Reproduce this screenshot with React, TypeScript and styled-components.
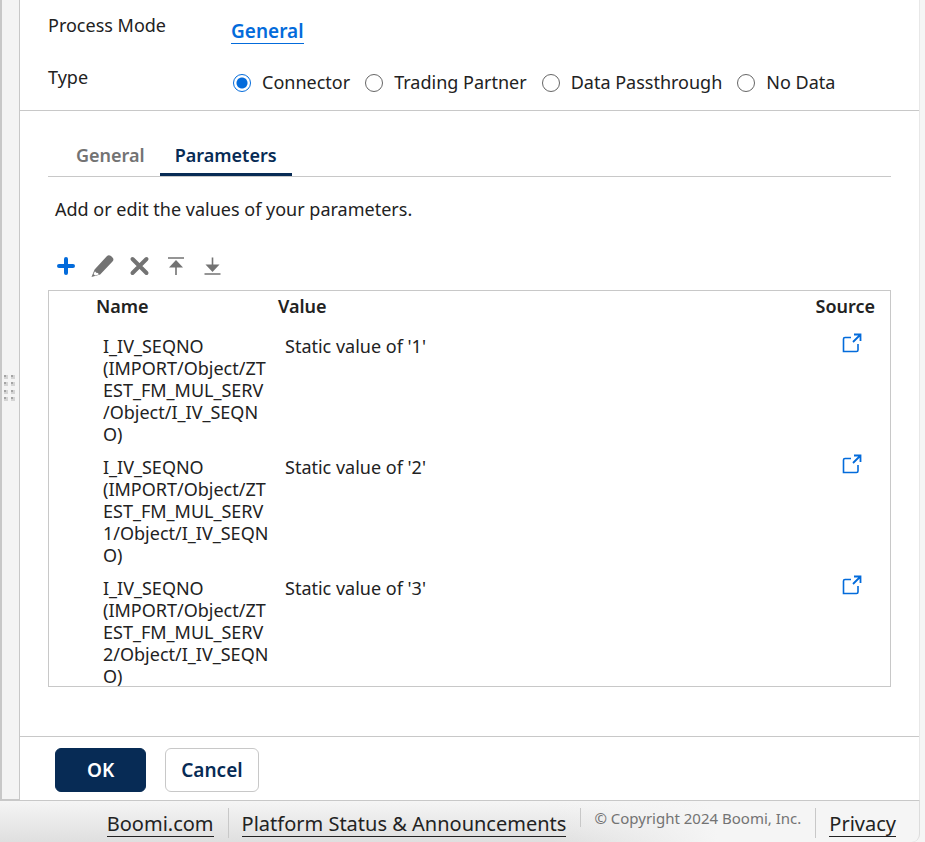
import React, { useState } from "react";
import styled, { createGlobalStyle, css } from "styled-components";

const color = {
  text: "#222222",
  line: "#c8c8c8",
  blue: "#036bdb",
  navy: "#072b55",
  grey: "#737373",
};

const GlobalStyle = createGlobalStyle`
  * { box-sizing: border-box; }
  body {
    margin: 0;
    background: #f5f5f5;
    color: ${color.text};
    font-family: "Noto Sans", "Open Sans", sans-serif;
    font-size: 18px;
    line-height: 22px;
  }
  button, input { font: inherit; }
`;

const Page = styled.div`
  display: flex;
  flex-direction: column;
  height: 100vh;
  overflow: hidden;
`;

const Shell = styled.div`
  display: flex;
  flex: 1;
  min-height: 0;
  padding-right: 5px;
`;

const Splitter = styled.div`
  display: flex;
  align-items: center;
  width: 20px;
  border: 1px solid ${color.line};
  border-top: 0;
  border-width: 0 1px 2px 2px;
  background: #f4f4f4;
  padding-bottom: 24px;
`;

const Panel = styled.main`
  display: flex;
  flex: 1;
  flex-direction: column;
  min-width: 0;
  background: #ffffff;
  border-right: 1px solid #e8e8e8;
  border-bottom: 1px solid ${color.line};
`;

const Settings = styled.section`
  display: grid;
  grid-template-columns: 182px 1fr;
  row-gap: 22px;
  padding: 14px 28px 17px;
  border-bottom: 1px solid ${color.line};
`;

const FieldLabel = styled.span``;

const Field = styled.div`
  display: flex;
  align-items: center;
  padding-top: 5px;
`;

const ModeLink = styled.a`
  margin-left: 1px;
  border-bottom: 1px solid ${color.blue};
  color: ${color.blue};
  font-size: 19px;
  font-weight: 600;
  line-height: 24px;
  text-decoration: none;
`;

const Choices = styled.div`
  display: flex;
  gap: 15px;
  padding: 5px 0 0 3px;
`;

const Choice = styled.label`
  display: flex;
  align-items: center;
  gap: 11px;
  white-space: nowrap;
`;

const Radio = styled.input`
  appearance: none;
  flex: none;
  width: 18px;
  height: 18px;
  margin: 2px 0 0;
  border: 1px solid #666666;
  border-radius: 50%;
  background: #ffffff;
  &:checked {
    border-color: ${color.blue};
    background: radial-gradient(circle, ${color.blue} 5px, #ffffff 6px);
  }
`;

const Content = styled.section`
  display: flex;
  flex: 1;
  flex-direction: column;
  min-height: 0;
  padding: 27px 28px 49px;
`;

const Tabs = styled.div`
  display: flex;
  padding-left: 13px;
  border-bottom: 1px solid ${color.line};
`;

const Tab = styled.button<{ $active: boolean }>`
  padding: 6px 15px 7px;
  border: 0;
  border-bottom: 3px solid ${(p) => (p.$active ? color.navy : "transparent")};
  background: none;
  color: ${(p) => (p.$active ? color.navy : color.grey)};
  font-weight: 600;
`;

const Hint = styled.p`
  margin: 21px 7px 34px;
`;

const Toolbar = styled.div`
  display: flex;
  gap: 12px;
  padding: 0 5px 12px;
`;

const ToolButton = styled.button<{ $accent?: boolean }>`
  width: 25px;
  height: 24px;
  padding: 0;
  border: 0;
  background: none;
  color: ${(p) => (p.$accent ? color.blue : color.grey)};
  svg { display: block; }
`;

const TableBox = styled.div`
  flex: 1;
  min-height: 0;
  overflow: hidden;
  border: 1px solid ${color.line};
`;

const Table = styled.table`
  width: 100%;
  border-collapse: collapse;
  table-layout: fixed;
`;

const Col = styled.col<{ $width?: number }>`
  ${(p) => p.$width && css`width: ${p.$width}px;`}
`;

const Head = styled.th<{ $end?: boolean }>`
  padding: 4px 15px 13px 0;
  font-weight: 600;
  text-align: ${(p) => (p.$end ? "right" : "left")};
`;

const Cell = styled.td<{ $end?: boolean }>`
  padding: 5px 9px 6px 7px;
  vertical-align: top;
  ${(p) => p.$end && css`padding: 3px 28px 0 0; text-align: right;`}
`;

const Path = styled.div`
  word-break: break-all;
`;

const SourceLink = styled.a`
  display: inline-block;
  color: ${color.blue};
  svg { display: block; }
`;

const Actions = styled.div`
  display: flex;
  gap: 19px;
  padding: 11px 35px 8px;
  border-top: 1px solid ${color.line};
`;

const ActionButton = styled.button<{ $primary?: boolean }>`
  height: 44px;
  padding: 0 ${(p) => (p.$primary ? 31 : 15)}px;
  border: 1px solid ${(p) => (p.$primary ? color.navy : color.line)};
  border-radius: 6px;
  background: ${(p) => (p.$primary ? color.navy : "#ffffff")};
  color: ${(p) => (p.$primary ? "#ffffff" : color.navy)};
  font-size: 19px;
  font-weight: 600;
`;

const Footer = styled.footer`
  display: flex;
  justify-content: flex-end;
  height: 41px;
  margin-right: 5px;
  padding: 7px 23px 0 0;
  border-right: 1px solid #dcdcdc;
  border-bottom-right-radius: 8px;
  background:
    linear-gradient(90deg, rgba(245, 245, 245, 0) 60%, #f5f5f5 78%),
    linear-gradient(#f5f5f5, #dfdfdf);
  white-space: nowrap;
`;

const FooterItem = styled.div<{ $short?: boolean }>`
  height: ${(p) => (p.$short ? 19 : 30)}px;
  padding: 0 14px 0 13px;
  border-left: 1px solid ${color.line};
  &:first-child { border-left: 0; }
  &:last-child { padding-right: 0; }
`;

const FooterLink = styled.a`
  display: inline-block;
  margin-top: 4px;
  border-bottom: 1px solid ${color.text};
  color: ${color.text};
  font-size: 20px;
  line-height: 24px;
  text-decoration: none;
`;

const Copyright = styled.small`
  display: block;
  color: ${color.grey};
  font-size: 15px;
  line-height: 20px;
`;

const Grip = () => (
  <svg width="14" height="28" viewBox="0 0 14 28" aria-hidden="true">
    {[1, 8, 16, 23].flatMap((y) =>
      [2, 9].map((x) => (
        <g key={`${x}-${y}`}>
          <rect x={x} y={y} width="4" height="4" fill="#d4d4d4" />
          <rect x={x} y={y} width="2" height="2" fill="#a4a4a4" />
        </g>
      ))
    )}
  </svg>
);

const icons = {
  add: <path d="M13 5v14M6 12h14" stroke="currentColor" strokeWidth="4" strokeLinecap="round" />,
  edit: (
    <>
      <path d="M4.6 15.6 16.8 2.2q2-2 4.2-.1l1.5 1.4q1.9 2 0 4L10.2 20.5l-8.7 2.6z" fill="currentColor" />
      <path d="m5 17.2 1.2 1.6 1.8.2.8 1.4-3.8 1.2-1.5-1.5z" fill="#ffffff" />
    </>
  ),
  remove: <path d="m5.5 5 14 14M19.5 5l-14 14" stroke="currentColor" strokeWidth="4" strokeLinecap="round" />,
  top: (
    <>
      <path d="M4 4h16M12 8v13" stroke="currentColor" strokeWidth="1.6" />
      <path d="m12 6 7 7.5H5z" fill="currentColor" />
    </>
  ),
  bottom: (
    <>
      <path d="M3.5 20h16M11.5 3.5v12" stroke="currentColor" strokeWidth="1.6" />
      <path d="m11.5 18 7-7.5h-14z" fill="currentColor" />
    </>
  ),
};

const ToolIcon = ({ name }: { name: keyof typeof icons }) => (
  <svg width="25" height="24" viewBox="0 0 25 24" fill="none" aria-hidden="true">
    {icons[name]}
  </svg>
);

const ExternalIcon = () => (
  <svg width="20" height="20" viewBox="0 0 20 20" fill="none" stroke="currentColor" aria-hidden="true">
    <path d="M9 4.5H3Q1.5 4.5 1.5 6V18.5H14.5Q16 18.5 16 17V11" strokeWidth="1.6" />
    <path d="M12 1.5H18.5V8M18.5 1.5 11 9" strokeWidth="1.8" />
  </svg>
);

const tools: { name: keyof typeof icons; label: string }[] = [
  { name: "add", label: "Add" },
  { name: "edit", label: "Edit" },
  { name: "remove", label: "Remove" },
  { name: "top", label: "Move to top" },
  { name: "bottom", label: "Move to bottom" },
];

const rows = [
  { object: "ZTEST_FM_MUL_SERV", field: "I_IV_SEQNO", value: "1" },
  { object: "ZTEST_FM_MUL_SERV1", field: "I_IV_SEQNO", value: "2" },
  { object: "ZTEST_FM_MUL_SERV2", field: "I_IV_SEQNO", value: "3" },
];

const types = ["Connector", "Trading Partner", "Data Passthrough", "No Data"];

export default function App() {
  const [type, setType] = useState("Connector");
  const [tab, setTab] = useState("Parameters");

  return (
    <Page>
      <GlobalStyle />
      <Shell>
        <Splitter>
          <Grip />
        </Splitter>
        <Panel>
          <Settings>
            <FieldLabel>Process Mode</FieldLabel>
            <Field>
              <ModeLink href="#mode">General</ModeLink>
            </Field>
            <FieldLabel id="type-label">Type</FieldLabel>
            <Choices role="radiogroup" aria-labelledby="type-label">
              {types.map((t) => (
                <Choice key={t}>
                  <Radio type="radio" name="type" checked={type === t} onChange={() => setType(t)} />
                  {t}
                </Choice>
              ))}
            </Choices>
          </Settings>
          <Content>
            <Tabs role="tablist">
              {["General", "Parameters"].map((t) => (
                <Tab key={t} type="button" role="tab" aria-selected={tab === t} $active={tab === t} onClick={() => setTab(t)}>
                  {t}
                </Tab>
              ))}
            </Tabs>
            <Hint>Add or edit the values of your parameters.</Hint>
            <Toolbar>
              {tools.map((t) => (
                <ToolButton key={t.name} type="button" aria-label={t.label} $accent={t.name === "add"}>
                  <ToolIcon name={t.name} />
                </ToolButton>
              ))}
            </Toolbar>
            <TableBox>
              <Table>
                <colgroup>
                  <Col $width={47} />
                  <Col $width={182} />
                  <Col />
                  <Col $width={120} />
                </colgroup>
                <thead>
                  <tr>
                    <Head />
                    <Head scope="col">Name</Head>
                    <Head scope="col">Value</Head>
                    <Head scope="col" $end>Source</Head>
                  </tr>
                </thead>
                <tbody>
                  {rows.map((r) => (
                    <tr key={r.object}>
                      <Cell />
                      <Cell>
                        {r.field}
                        {/* The zero-width space lets a line break before the slash. */}
                        <Path>{`(IMPORT/Object/${r.object}\u200B/Object/${r.field})`}</Path>
                      </Cell>
                      <Cell>{`Static value of '${r.value}'`}</Cell>
                      <Cell $end>
                        <SourceLink href="#source" aria-label="Open source">
                          <ExternalIcon />
                        </SourceLink>
                      </Cell>
                    </tr>
                  ))}
                </tbody>
              </Table>
            </TableBox>
          </Content>
          <Actions>
            <ActionButton type="button" $primary>OK</ActionButton>
            <ActionButton type="button">Cancel</ActionButton>
          </Actions>
        </Panel>
      </Shell>
      <Footer>
        <FooterItem>
          <FooterLink href="#boomi">Boomi.com</FooterLink>
        </FooterItem>
        <FooterItem>
          <FooterLink href="#status">Platform Status &amp; Announcements</FooterLink>
        </FooterItem>
        <FooterItem $short>
          <Copyright>© Copyright 2024 Boomi, Inc.</Copyright>
        </FooterItem>
        <FooterItem>
          <FooterLink href="#privacy">Privacy</FooterLink>
        </FooterItem>
      </Footer>
    </Page>
  );
}
